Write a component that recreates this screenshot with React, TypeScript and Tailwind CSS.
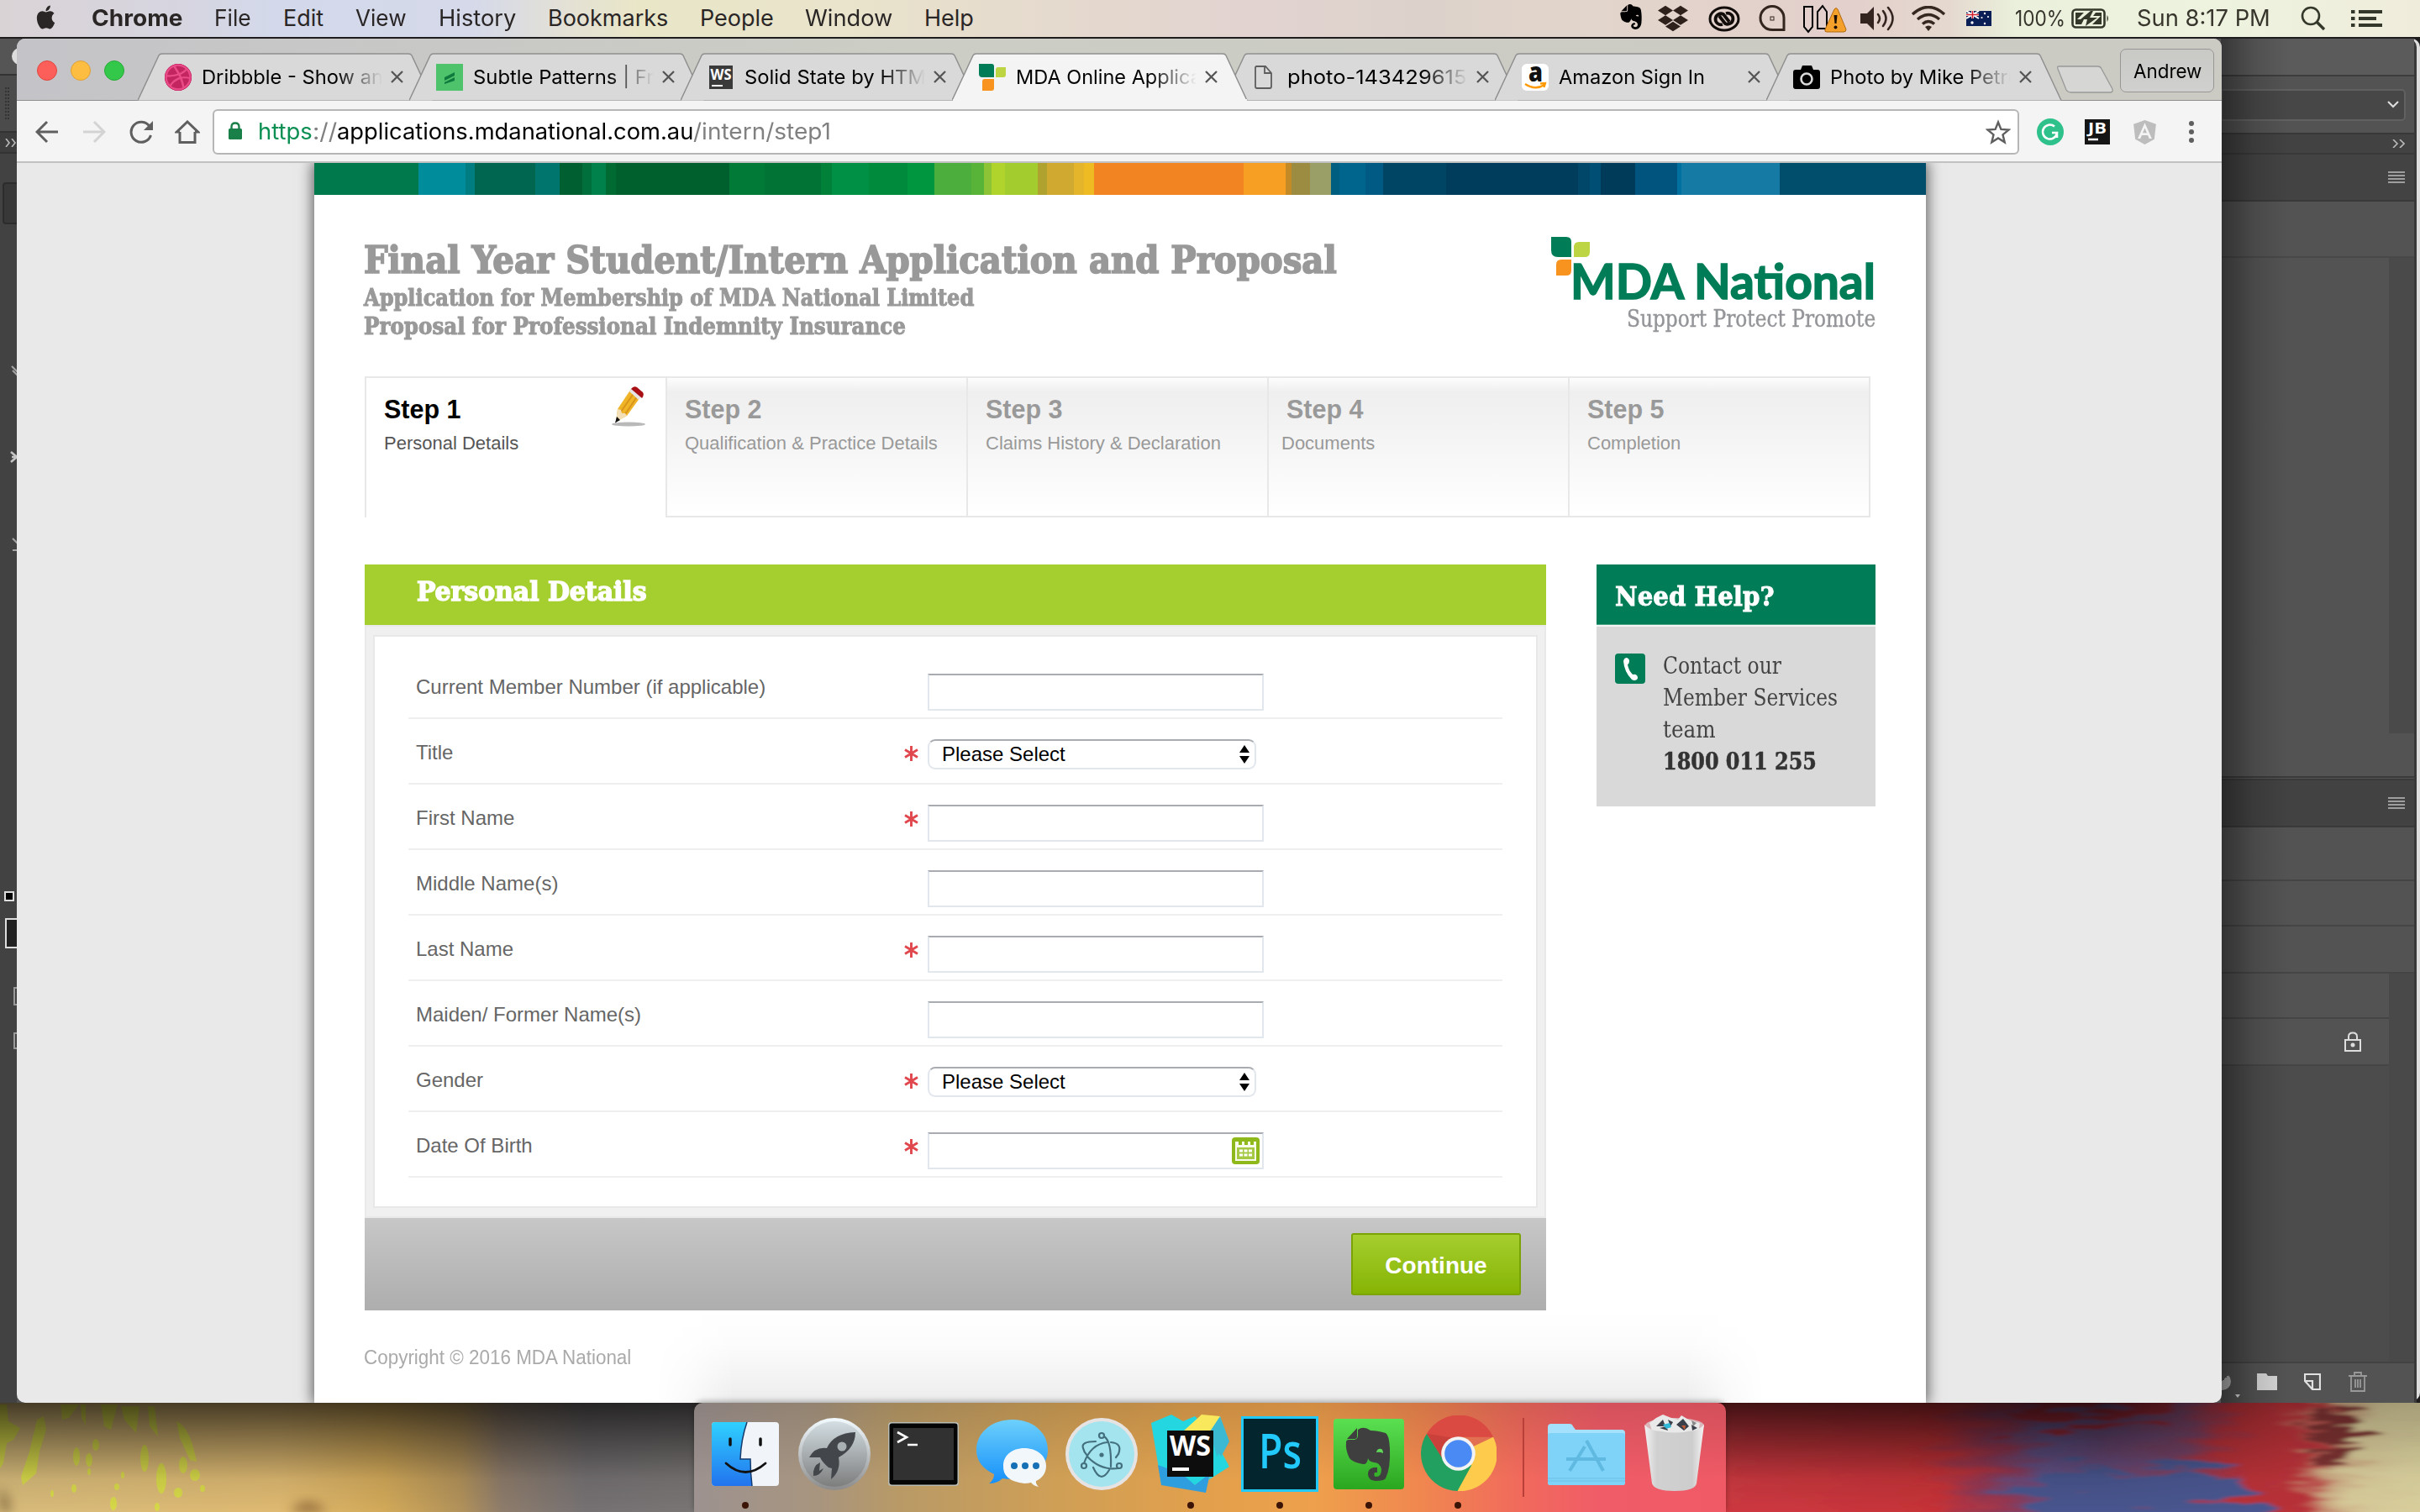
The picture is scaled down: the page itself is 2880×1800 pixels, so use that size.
import React, { useLayoutEffect, useRef, useState } from "react";
import { FaApple, FaEvernote, FaDropbox, FaDribbble, FaAngular } from "react-icons/fa";

/* A run of text squeezed or stretched to a known width. */
function Fit({ w, className = "", children }: { w: number; className?: string; children: React.ReactNode }) {
  const ref = useRef<HTMLSpanElement>(null);
  const [s, setS] = useState(1);
  useLayoutEffect(() => {
    if (ref.current) setS(w / ref.current.offsetWidth);
  }, [w]);
  return (
    <span className={"inline-block shrink-0 whitespace-nowrap " + className} style={{ width: w }}>
      <span ref={ref} className="inline-block origin-left" style={{ transform: `scaleX(${s})` }}>
        {children}
      </span>
    </span>
  );
}

const SLAB = "font-['DejaVu_Serif_Condensed','DejaVu_Serif',serif]";

/* ---------- menu bar ---------- */

function MenuBar() {
  return (
    <div className="absolute inset-x-0 top-0 h-[44px] bg-[linear-gradient(90deg,#dad3d6_0px,#d6d5e0_220px,#d3d9eb_330px,#d5d9ea_560px,#e4e1d4_680px,#e9e6c8_760px,#e9e4cb_1000px,#e6dccd_1180px,#e2d3d0_1480px,#ddd2cb_1700px,#e2d5cb_1900px,#e3cfcc_2200px,#e5d9cf_2320px,#eaf0dc_2400px,#edf3df_2640px,#f0ecdc_2880px)]">
      <div className="flex h-[44px] items-center text-[27px] leading-[44px] text-[#2a2626] font-['Inter',sans-serif]">
        <FaApple className="-mt-1 ml-[40px] mr-[40px] size-[29px] scale-y-110" />
        <Fit w={108} className="font-bold mr-[38px]">Chrome</Fit>
        <Fit w={44} className="mr-[38px]">File</Fit>
        <Fit w={48} className="mr-[38px]">Edit</Fit>
        <Fit w={61} className="mr-[38px]">View</Fit>
        <Fit w={92} className="mr-[38px]">History</Fit>
        <Fit w={143} className="mr-[38px]">Bookmarks</Fit>
        <Fit w={88} className="mr-[37px]">People</Fit>
        <Fit w={104} className="mr-[38px]">Window</Fit>
        <Fit w={59}>Help</Fit>
        <div className="grow" />
        <FaEvernote className="-mt-1 mr-[15px] size-[34px] text-black" />
        <FaDropbox className="mr-[24px] size-[36px] text-[#2e211c]" />
        <svg className="mr-[22px] h-[31px] w-[38px]" viewBox="0 0 38 31">
          <ellipse cx="19" cy="15.500" rx="17" ry="13.500" fill="none" stroke="#120d0b" strokeWidth="3" />
          <path d="M17 22a6.500 6.500 0 1 1 1-12l7 9M21 9a6.500 6.500 0 1 1-1 12l-7-9" fill="none" stroke="#120d0b" strokeWidth="3.800" />
        </svg>
        <svg className="mr-[20px] h-[32px] w-[32px]" viewBox="0 0 32 32">
          <path d="M30 29.500H16A14 14 0 1 1 30 16Z" fill="none" stroke="#33261f" strokeWidth="3" />
          <rect x="14" y="14" width="4" height="4" fill="none" stroke="#33261f" />
        </svg>
        <svg className="mr-[15px] h-[36px] w-[54px]" viewBox="0 0 54 36">
          <path d="M2 4h10v24l-5 6-5-6ZM18 30V10l6-7 5 7v20Z" fill="none" stroke="#000" strokeWidth="2" />
          <path d="M38 7q2-3 4 0l10 24q0 3-3 3H29q-3 0-2-3Z" fill="#f5a02a" stroke="#b06a10" />
          <path d="M37.500 14h4l-1 10h-2Z" fill="#1d0f00" />
          <circle cx="39.500" cy="28.500" r="2" fill="#1d0f00" />
        </svg>
        <svg className="mr-[18px] h-[34px] w-[42px]" viewBox="0 0 42 34">
          <path d="M0 11h8l8-8v28l-8-8H0Z" fill="#33241f" />
          <path d="M21 12q4 5 0 10M27 8q7 9 0 18M33 4q11 13 0 26" fill="none" stroke="#33241f" strokeWidth="2.500" strokeLinecap="round" />
        </svg>
        <svg className="mr-[24px] h-[30px] w-[42px]" viewBox="0 0 42 30">
          <path d="M2 10q19-17 38 0M8 16q13-11 26 0M14 21.500q7-6 14 0" fill="none" stroke="#352821" strokeWidth="3.400" />
          <path d="M17 25q4-3 8 0l-4 5Z" fill="#352821" />
        </svg>
        <svg className="mr-[28px] h-[18px] w-[30px]" viewBox="0 0 30 18">
          <rect width="30" height="18" fill="#0a1f56" />
          <path d="M0 0l15 9M15 0L0 9" stroke="#fff" strokeWidth="2" />
          <path d="M7.500 0v9M0 4.500h15" stroke="#fff" strokeWidth="3" />
          <path d="M7.500 0v9M0 4.500h15" stroke="#d0202e" strokeWidth="1.600" />
          <g fill="#fff"><circle cx="7" cy="14" r="1.700" /><circle cx="22" cy="3" r="1.200" /><circle cx="22" cy="15" r="1.200" /><circle cx="18.500" cy="8" r="1.100" /><circle cx="26" cy="7" r="1.100" /></g>
        </svg>
        <Fit w={60} className="mr-[7px] text-[26px] text-[#37352c]">100%</Fit>
        <svg className="mr-[32px] h-[24px] w-[46px]" viewBox="0 0 46 24">
          <rect x="1.500" y="1.500" width="38" height="21" rx="4" fill="none" stroke="#34382b" strokeWidth="2.600" />
          <path d="M5 5h10L7 13h8l-3 6H5ZM36 19H25l10-10h-9l3-4h7Z" fill="#34382b" />
          <path d="M23 3L11 13h8L17 21 31 11h-9l4-8Z" fill="#34382b" />
          <path d="M42.500 8q3 4 0 8Z" fill="#34382b" />
        </svg>
        <Fit w={159} className="mr-[36px] text-[#37352c]">Sun 8:17 PM</Fit>
        <svg className="mr-[30px] h-[30px] w-[30px]" viewBox="0 0 30 30">
          <circle cx="12" cy="12" r="10" fill="none" stroke="#34382b" strokeWidth="2.600" />
          <path d="M19 19l9 9" stroke="#34382b" strokeWidth="3.400" />
        </svg>
        <svg className="mr-[45px] h-[20px] w-[37px]" viewBox="0 0 37 20">
          <path d="M0 2h4.500M0 10h4.500M0 18h4.500M9 2h28M9 10h21M9 18h28" stroke="#34382b" strokeWidth="4" />
        </svg>
      </div>
    </div>
  );
}

/* ---------- browser chrome ---------- */

const fav: Record<string, React.ReactNode> = {
  dribbble: (
    <div className="grid size-[32px] place-items-center rounded-full bg-[#c2185b]">
      <FaDribbble className="size-[32px] rounded-full bg-[#c2255f] text-[#ea4c89]" />
    </div>
  ),
  subtle: (
    <svg className="size-[32px]" viewBox="0 0 32 32">
      <rect width="32" height="32" fill="#4fc36c" />
      <path d="M10 16L22 10v4L10 20ZM10 22l12-6v4l-12 4Z" fill="#0f7a3d" />
    </svg>
  ),
  ws: (
    <svg className="size-[32px]" viewBox="0 0 32 32">
      <rect x="2" y="2" width="28" height="28" fill="#3a3a3a" />
      <text x="3.500" y="18.500" fontSize="18" fontWeight="700" fill="#fff" textLength="25" lengthAdjust="spacingAndGlyphs" fontFamily="Open Sans, sans-serif">WS</text>
      <path d="M5 26h13" stroke="#fff" strokeWidth="2" />
    </svg>
  ),
  mda: (
    <svg className="size-[32px]" viewBox="0 0 32 32">
      <path d="M0 0h15q3 0 3 3v13H4q-4 0-4-4Z" fill="#007d57" />
      <path d="M20 16V7q0-3 3-3h9v9q0 3-3 3Z" fill="#bdd443" />
      <path d="M4 32V21q0-3 3-3h11v11q0 3-3 3Z" fill="#f7931e" />
    </svg>
  ),
  file: (
    <svg className="size-[32px]" viewBox="0 0 32 32">
      <path d="M7 3h11l7 8v16q0 2-2 2H8q-2 0-2-2V4ZM17 3v8h8" fill="none" stroke="#5d5d5d" strokeWidth="1.800" />
    </svg>
  ),
  amazon: (
    <div className="grid size-[32px] place-items-center rounded-[6px] bg-white">
      <svg className="size-[32px]" viewBox="0 0 32 32">
        <text x="8" y="21" fontSize="31" fontWeight="800" fill="#111" textLength="17" lengthAdjust="spacingAndGlyphs" fontFamily="Open Sans, sans-serif">a</text>
        <path d="M4 24q12 8 23 1M22 23.500l6-.5-1.500 5" fill="none" stroke="#f90" strokeWidth="2.300" />
      </svg>
    </div>
  ),
  camera: (
    <svg className="size-[32px]" viewBox="0 0 32 32">
      <path d="M3 7h6l2-5h11l2 5h5q3 0 3 3v17q0 3-3 3H3q-3 0-3-3V10q0-3 3-3Z" fill="#000" />
      <circle cx="16" cy="18" r="6.500" fill="none" stroke="#d9d9d9" strokeWidth="2.600" />
    </svg>
  ),
};

const tabs = [
  { icon: "dribbble", text: "Dribbble - Show an", w: 216, fade: true },
  { icon: "subtle", text: "Subtle Patterns | Fr", w: 215, fade: true },
  { icon: "ws", text: "Solid State by HTM", w: 216, fade: true },
  { icon: "mda", text: "MDA Online Applica", w: 221, fade: true, active: true },
  { icon: "file", text: "photo-143429615", w: 214, fade: true },
  { icon: "amazon", text: "Amazon Sign In", w: 174, fade: false },
  { icon: "camera", text: "Photo by Mike Petru", w: 226, fade: true },
];

function Tab({ t }: { t: (typeof tabs)[number] }) {
  return (
    <div className={"relative h-[57px] w-[323px] shrink-0 " + (t.active ? "z-10" : "")}>
      <svg className="absolute -left-[26px] top-0 h-[57px] w-[352px]" viewBox="0 0 352 57">
        <path d="M0 56.500L25 3q1-2 4-2H322q3 0 4 2L351 56.500" fill={t.active ? "#f4f4f4" : "#d9d9d9"} stroke="#8f8f8f" strokeWidth="1.500" />
        {t.active && <path d="M1 56h350" stroke="#f4f4f4" strokeWidth="2" />}
      </svg>
      <div className="relative flex h-[57px] items-center pl-[6px]">
        {fav[t.icon]}
        <div
          className={
            "ml-[12px] w-[217px] text-[23.5px] leading-[56px] text-black font-['Inter',sans-serif] " +
            (t.fade ? "[mask-image:linear-gradient(90deg,#000_74%,transparent_99%)]" : "")
          }
        >
          <Fit w={t.w}>{t.text}</Fit>
        </div>
        <svg className="ml-[8px] size-[15px]" viewBox="0 0 15 15">
          <path d="M1 1l13 13M14 1L1 14" stroke="#555" strokeWidth="2.300" />
        </svg>
      </div>
    </div>
  );
}

function TabStrip() {
  return (
    <div className="flex h-[74px] border-b border-[#8f8f8f] bg-[linear-gradient(90deg,#c4c4c8,#cccdc4_40%,#cbcac3)]">
      <div className="ml-[24px] mt-[26px] flex w-[146px] shrink-0 gap-[16px]">
        <div className="size-[24px] rounded-full border border-[#e2463f] bg-[#fc5f5a]" />
        <div className="size-[24px] rounded-full border border-[#dfa035] bg-[#fdbd40]" />
        <div className="size-[24px] rounded-full border border-[#27aa35] bg-[#34c84a]" />
      </div>
      <div className="mt-[17px] flex w-[2286px]">
        {tabs.map((t) => (
          <Tab key={t.text} t={t} />
        ))}
        <svg className="-ml-[4px] mt-[15px] h-[34px] w-[70px] shrink-0" viewBox="0 0 70 34">
          <path d="M3 1H49q4 0 5 3L67 28q1 4-3 4H18q-4 0-6-3L2 4q-1-3 1-3Z" fill="#d6d6d4" stroke="#999" strokeWidth="1.300" />
        </svg>
      </div>
      <div className="ml-[47px] mt-[12px] h-[52px] w-[112px] rounded-[7px] border-[1.5px] border-[#979797] bg-[linear-gradient(#c9c9c6,#d0d0ce)] text-center text-[23.500px] leading-[52px] text-black font-['Inter',sans-serif]">
        <Fit w={81} className="text-left">Andrew</Fit>
      </div>
    </div>
  );
}

function Toolbar() {
  return (
    <div className="flex h-[74px] items-center border-b-[2px] border-[#c1c1c1] bg-[#f4f4f4] pt-[2px]">
      <svg className="ml-[22px] h-[28px] w-[28px]" viewBox="0 0 28 28">
        <path d="M27 14H3M14 2L2 14l12 12" fill="none" stroke="#5f5f5f" strokeWidth="3" />
      </svg>
      <svg className="ml-[28px] h-[28px] w-[28px]" viewBox="0 0 28 28">
        <path d="M1 14h24M14 2l12 12-12 12" fill="none" stroke="#d3d3d3" strokeWidth="3" />
      </svg>
      <svg className="ml-[28px] h-[28px] w-[30px]" viewBox="0 0 30 28">
        <path d="M25.500 18A12 12 0 1 1 24 7.500" fill="none" stroke="#5f5f5f" strokeWidth="3" />
        <path d="M28 1v11H17Z" fill="#5f5f5f" />
      </svg>
      <svg className="ml-[24px] h-[28px] w-[30px]" viewBox="0 0 30 28">
        <path d="M6 14v12.500h18V14M6 14H2.500L15 2l12.500 12H24" fill="none" stroke="#5f5f5f" strokeWidth="3" />
      </svg>
      <div className="ml-[15px] flex h-[54px] w-[2150px] items-center rounded-[6px] border-[2px] border-[#b6b6b6] bg-white text-[27px] leading-[50px] font-['Inter',sans-serif]">
        <svg className="-mt-[2px] ml-[16px] h-[22px] w-[18px]" viewBox="0 0 18 22">
          <rect x="1" y="8" width="16" height="13" rx="1.500" fill="#188048" />
          <path d="M4.500 9V6q0-4.500 4.500-4.500T13.500 6v3" fill="none" stroke="#188048" strokeWidth="2.400" />
        </svg>
        <Fit w={65} className="ml-[18px] text-[#0b8f53]">https</Fit>
        <Fit w={29} className="text-[#808080]">://</Fit>
        <Fit w={424} className="text-black">applications.mdanational.com.au</Fit>
        <Fit w={164} className="text-[#808080]">/intern/step1</Fit>
        <div className="grow" />
        <svg className="mr-[8px] h-[30px] w-[30px]" viewBox="0 0 30 30">
          <path d="M15 3.500l3.400 8.400 9 .7-6.900 5.800 2.200 8.900L15 22.500l-7.700 4.800 2.200-8.900L2.600 12.600l9-.7Z" fill="none" stroke="#5f5f5f" strokeWidth="2.400" />
        </svg>
      </div>
      <svg className="ml-[21px] size-[32px]" viewBox="0 0 32 32">
        <circle cx="16" cy="16" r="16" fill="#2fc18c" />
        <path d="M21 9.500A8.500 8.500 0 1 0 24 17H18M24 17v6" fill="none" stroke="#fff" strokeWidth="2.600" />
      </svg>
      <svg className="ml-[25px] size-[30px]" viewBox="0 0 30 30">
        <rect width="30" height="30" fill="#151515" />
        <text x="4" y="17" fontSize="17" fontWeight="700" fill="#fff" textLength="22" lengthAdjust="spacingAndGlyphs" fontFamily="Open Sans, sans-serif">JB</text>
        <path d="M4 24h12" stroke="#fff" strokeWidth="2.400" />
      </svg>
      <FaAngular className="ml-[25px] size-[33px] text-[#bdbdbd]" />
      <div className="ml-[36px] flex flex-col gap-[4px]">
        <div className="size-[6px] rounded-full bg-[#5f5f5f]" />
        <div className="size-[6px] rounded-full bg-[#5f5f5f]" />
        <div className="size-[6px] rounded-full bg-[#5f5f5f]" />
      </div>
    </div>
  );
}

/* ---------- page ---------- */

const stripe: [number, string][] = [
  [124, "#007a4d"], [56, "#008c9a"], [11, "#007d80"], [72, "#006650"], [29, "#00756d"], [27, "#005f30"], [11, "#006f3c"],
  [17, "#00804a"], [12, "#006a33"], [135, "#00602d"], [42, "#007a36"], [67, "#007335"], [13, "#008038"], [44, "#009045"],
  [46, "#008a3c"], [32, "#00963f"], [44, "#4cae3c"], [15, "#58b438"], [9, "#8cc435"], [16, "#b1d42c"], [39, "#a3cc2f"],
  [11, "#b0a22e"], [32, "#d0aa30"], [12, "#e4b52a"], [12, "#efbb22"], [178, "#f28422"], [50, "#f79f22"], [7, "#c48a26"],
  [22, "#9b8c42"], [25, "#9a9f68"], [10, "#005f80"], [31, "#00658c"], [21, "#005a84"], [75, "#004563"], [157, "#003d5c"],
  [14, "#00476a"], [13, "#004e74"], [41, "#003c5a"], [50, "#00547e"], [5, "#0070a0"], [117, "#167ba4"], [174, "#004e6b"],
];

const steps = [
  { t: "Step 1", d: "Personal Details", active: true },
  { t: "Step 2", d: "Qualification & Practice Details" },
  { t: "Step 3", d: "Claims History & Declaration" },
  { t: "Step 4", d: "Documents", out: true },
  { t: "Step 5", d: "Completion" },
];

const fields = [
  { label: "Current Member Number (if applicable)", kind: "input", req: false },
  { label: "Title", kind: "select", req: true },
  { label: "First Name", kind: "input", req: true },
  { label: "Middle Name(s)", kind: "input", req: false },
  { label: "Last Name", kind: "input", req: true },
  { label: "Maiden/ Former Name(s)", kind: "input", req: false },
  { label: "Gender", kind: "select", req: true },
  { label: "Date Of Birth", kind: "date", req: true },
];

function Pencil() {
  return (
    <svg className="absolute right-[22px] top-[10px] h-[48px] w-[44px]" viewBox="0 0 44 48">
      <ellipse cx="22" cy="45" rx="20" ry="2.500" fill="#b9b9b9" />
      <path d="M25 3L36 13 20 35 7 42 9 27Z" fill="#f0b429" />
      <path d="M29 7L13 30M33 11L18 33" stroke="#d8951a" strokeWidth="2" />
      <path d="M9 27l4 1 1 4 4 0 2 3L7 42Z" fill="#f3dfb8" />
      <path d="M8 36l4 4-6 3.500Z" fill="#111" />
      <path d="M23 6L34 16l2.500-3.500L25.500 2.500Z" fill="#e6e6e6" />
      <path d="M25 3q3-4 7-2l7 6q2 3-1 7Z" fill="#a81016" />
    </svg>
  );
}

function FieldRow({ f }: { f: (typeof fields)[number] }) {
  return (
    <div className="flex h-[78px] items-start border-b-2 border-[#efefef] pl-[9px]">
      <div className="w-[581px] pt-[24px] text-[24px] leading-[32px] text-[#666]">{f.label}</div>
      <div className="w-[28px] pt-[32px]">
        {f.req && (
          <svg className="h-[18px] w-[17px]" viewBox="0 0 17 18">
            <path d="M8.500 0v18M1 4.500l15 9M16 4.500L1 13.500" stroke="#e0484e" strokeWidth="2.900" />
          </svg>
        )}
      </div>
      {f.kind === "select" ? (
        <div className="mt-[24px] flex h-[36px] w-[391px] items-center rounded-[9px] border-2 border-[#e2e6ed] border-t-[#a8abb0] bg-white pl-[15px] text-[24px] leading-[32px] text-black">
          <span className="grow">Please Select</span>
          <svg className="mr-[6px] h-[22px] w-[12px]" viewBox="0 0 12 22">
            <path d="M6 0l6 9H0ZM6 22l-6-9h12Z" fill="#000" />
          </svg>
        </div>
      ) : (
        <div className="mt-[24px] flex h-[44px] w-[400px] items-start justify-end border-2 border-[#e2e6ed] border-t-[#a8abb0] bg-white">
          {f.kind === "date" && (
            <svg className="mr-[3px] mt-[4px] h-[32px] w-[33px]" viewBox="0 0 33 32">
              <rect width="33" height="32" rx="4" fill="#8fb81b" />
              <path d="M4 5h4v4h4V5h3v4h4V5h3v4h4V5h3v23H4Z" fill="#f7fbe9" />
              <rect x="6" y="12" width="21" height="14" fill="#a6c944" />
              <path d="M9 16h15M9 21h15" stroke="#fff" strokeWidth="3" strokeDasharray="4 1.500" />
            </svg>
          )}
        </div>
      )}
    </div>
  );
}

function Page() {
  return (
    <div className="ml-[354px] flex h-[1476px] w-[1918px] flex-col bg-white shadow-[0_0_16px_2px_rgba(0,0,0,0.6)] font-['Liberation_Sans',Arial,sans-serif]">
      <div className="flex h-[38px] shrink-0">
        {stripe.map(([w, c], i) => (
          <div key={i} className="shrink-0" style={{ width: w, background: c }} />
        ))}
      </div>

      <div className="flex h-[216px] justify-between pl-[59px] pr-[60px]">
        <div className={"flex flex-col pt-[52px] font-bold text-[#999] " + SLAB}>
          <Fit w={1158} className="h-[52px] text-[44px] leading-[52px] [-webkit-text-stroke:1.6px_#999]">Final Year Student/Intern Application and Proposal</Fit>
          <Fit w={726} className="h-[36px] text-[27.500px] leading-[36px] [-webkit-text-stroke:1px_#999]">Application for Membership of MDA National Limited</Fit>
          <Fit w={645} className="h-[34px] text-[27.500px] leading-[33px] [-webkit-text-stroke:1px_#999]">Proposal for Professional Indemnity Insurance</Fit>
        </div>
        <div className="relative mt-[50px] flex h-[120px] w-[386px] flex-col items-end">
          <svg className="absolute left-0 top-0 h-[46px] w-[46px]" viewBox="0 0 46 46">
            <path d="M0 0h18q6 0 6 6v18H8q-8 0-8-8Z" fill="#007d57" />
            <path d="M27 24V12q0-6 6-6h13v12q0 6-6 6Z" fill="#bdd443" />
            <path d="M6 46V33q0-6 6-6h12v13q0 6-6 6Z" fill="#f7931e" />
          </svg>
          <Fit w={363} className="mt-[17px] h-[69px] text-[57px] font-bold leading-[70px] text-[#007d57] [-webkit-text-stroke:1.6px_#007d57] font-['Lato',sans-serif]">MDA National</Fit>
          <Fit w={296} className={"-mt-[6px] h-[36px] text-[27px] leading-[36px] text-[#939598] [-webkit-text-stroke:0.4px_#939598] " + SLAB}>Support Protect Promote</Fit>
        </div>
      </div>

      <div className="ml-[60px] flex h-[168px] w-[1792px] shrink-0 border-t-2 border-[#e8e8e8]">
        {steps.map((s) => (
          <div
            key={s.t}
            className={
              "relative h-[166px] w-[358px] shrink-0 border-l-2 border-[#e8e8e8] pl-[21px] pt-[21px] last:w-[360px] last:border-r-2 " +
              (s.active ? "bg-white" : "border-b-2 bg-[linear-gradient(#fdfdfd_0%,#efefef_10%,#f1f1f1_25%,#fff_100%)]")
            }
          >
            <div className={"text-[30.500px] font-bold leading-[32px] " + (s.active ? "text-black" : "text-[#999]")}>{s.t}</div>
            <div className={"mt-[9px] whitespace-nowrap text-[22px] leading-[32px] " + (s.active ? "text-[#555]" : "text-[#999]") + (s.out ? " -ml-[6px]" : "")}>{s.d}</div>
            {s.active && <Pencil />}
          </div>
        ))}
      </div>

      <div className="mt-[56px] flex items-start px-[60px]">
        <div className="w-[1406px]">
          <div className={"h-[72px] bg-[#a5ce2f] pl-[62px] text-[32px] font-bold leading-[65px] text-white " + SLAB}>
            <Fit w={274} className="[-webkit-text-stroke:1.4px_#fff]">Personal Details</Fit>
          </div>
          <div className="h-[706px] border-2 border-[#e9e9e9] bg-[#f0f0f0] px-[8px] py-[10px]">
            <div className="h-[682px] border-2 border-[#e8e8e8] bg-white pl-[40px] pr-[40px] pt-[20px]">
              {fields.map((f) => (
                <FieldRow key={f.label} f={f} />
              ))}
            </div>
          </div>
          <div className="flex h-[110px] items-start justify-end bg-[linear-gradient(#c7c7c7,#b1b1b1_85%,#aeaeae)] pr-[30px] pt-[18px]">
            <div className="h-[74px] w-[202px] rounded-[3px] border-2 border-[#7ba306] bg-[linear-gradient(#a5ce2f,#86b404)] text-center text-[28px] font-bold leading-[74px] text-white">Continue</div>
          </div>
          <div className="-ml-[1px] pt-[40px] text-[23px] leading-[32px] text-[#aaa]">
            <Fit w={318}>Copyright © 2016 MDA National</Fit>
          </div>
        </div>
        <div className="ml-[60px] w-[332px]">
          <div className={"h-[72px] border-b border-[#4ba385] bg-[#007d57] pl-[22px] text-[32px] font-bold leading-[77px] text-white " + SLAB}>
            <Fit w={190} className="[-webkit-text-stroke:0.8px_#fff]">Need Help?</Fit>
          </div>
          <div className="h-[2px] bg-[#f4f4f4]" />
          <div className="flex h-[214px] bg-[#d9d9d9] pl-[22px] pt-[32px]">
            <svg className="size-[36px]" viewBox="0 0 36 36">
              <rect width="36" height="36" rx="4" fill="#007d57" />
              <path d="M10 9q1-4 4-4 3 1 3 4 0 3-2 4 1 7 6 12 3-1 5 1 2 3 0 5-3 2-6 0Q11 22 10 9Z" fill="#fff" />
            </svg>
            <div className={"-mt-[4px] ml-[21px] flex flex-col text-[27px] leading-[38px] text-[#444] " + SLAB}>
              <Fit w={141} className="h-[38px]">Contact our</Fit>
              <Fit w={208} className="h-[38px]">Member Services</Fit>
              <Fit w={63} className="h-[38px]">team</Fit>
              <Fit w={183} className="h-[38px] font-bold text-[#333] [-webkit-text-stroke:0.5px_#333]">1800 011 255</Fit>
            </div>
          </div>
        </div>
      </div>
    </div>
  );
}

function Browser() {
  return (
    <div className="absolute left-[20px] top-[46px] h-[1624px] w-[2624px] overflow-hidden rounded-[10px] bg-[#e9e9e9]">
      <TabStrip />
      <Toolbar />
      <div className="relative h-[1476px] overflow-hidden">
        <Page />
        <div className="absolute bottom-0 left-[760px] h-[110px] w-[1320px] bg-[linear-gradient(transparent,rgba(0,0,0,0.012)_35%,rgba(0,0,0,0.045)_70%,rgba(0,0,0,0.075))] [mask-image:linear-gradient(90deg,transparent,rgba(0,0,0,.3)_3%,#000_7%,#000_93%,rgba(0,0,0,.3)_97%,transparent)]" />
      </div>
    </div>
  );
}

/* ---------- editor window behind ---------- */

function PanelMenu() {
  return (
    <svg className="h-[14px] w-[20px]" viewBox="0 0 20 14">
      <path d="M0 1h20M0 5h20M0 9h20M0 13h20" stroke="#bdbdbd" strokeWidth="1.600" />
    </svg>
  );
}

function Editor() {
  return (
    <div className="absolute left-0 top-[46px] flex h-[1624px] w-[2876px] justify-between rounded-t-[10px] border-r-[3px] border-[#393939] bg-[#535353]">
      <div className="flex w-[20px] flex-col overflow-hidden bg-[#424242]">
        <div className="flex h-[44px] items-center justify-end border-b-2 border-[#333] bg-[#555]">
          <div className="-mr-[14px] size-[20px] shrink-0 rounded-full bg-[#ddd]" />
        </div>
        <div className="flex h-[68px] items-center border-b-2 border-[#333] bg-[#4b4b4b] pl-[6px]">
          <div className="h-[38px] w-[5px] border-x-[2px] border-dotted border-[#333]" />
        </div>
        <div className="flex h-[25px] items-center border-b-2 border-[#333] bg-[#3d3d3d] pl-[6px]">
          <svg className="h-[10px] w-[14px]" viewBox="0 0 14 10"><path d="M1 0l4 5-4 5M8 0l4 5-4 5" fill="none" stroke="#bbb" strokeWidth="1.600" /></svg>
        </div>
        <div className="ml-[3px] mt-[34px] h-[50px] w-[24px] rounded-[4px] border-2 border-[#2c2c2c] bg-[#383838]" />
        <svg className="ml-[13px] mt-[164px] h-[18px] w-[16px] shrink-0" viewBox="0 0 16 18"><path d="M1 5l6 6 9-9M2 10l7 7" fill="none" stroke="#a5a5a5" strokeWidth="2" /></svg>
        <svg className="ml-[12px] mt-[86px] h-[18px] w-[16px] shrink-0" viewBox="0 0 16 18"><path d="M1 3l7 6-7 6M2 9h10" fill="none" stroke="#c5c5c5" strokeWidth="2.500" /></svg>
        <svg className="ml-[13px] mt-[86px] h-[18px] w-[16px] shrink-0" viewBox="0 0 16 18"><path d="M2 2l8 8M2 16h12V8" fill="none" stroke="#a5a5a5" strokeWidth="2" /></svg>
        <div className="ml-[5px] mt-[404px] size-[12px] shrink-0 border-2 border-[#ddd] bg-black" />
        <div className="ml-[6px] mt-[20px] h-[36px] w-[36px] shrink-0 border-2 border-[#ddd] bg-[#222]" />
        <div className="ml-[16px] mt-[46px] h-[22px] w-[20px] shrink-0 border-2 border-[#999]" />
        <div className="ml-[16px] mt-[32px] h-[20px] w-[20px] shrink-0 border-2 border-[#999]" />
      </div>

      <div className="relative flex w-[230px] flex-col">
        <div className="h-[45px] border-b-2 border-[#3d3d3d] bg-[#5b5b5b]" />
        <div className="flex h-[69px] items-center border-b-2 border-[#383838]">
          <div className="flex h-[38px] w-[220px] items-center justify-end rounded-r-[5px] border-[2px] border-[#616161] bg-[#474747] pr-[6px]">
            <svg className="h-[9px] w-[14px]" viewBox="0 0 14 9"><path d="M1 1l6 6 6-6" fill="none" stroke="#ddd" strokeWidth="2.200" /></svg>
          </div>
        </div>
        <div className="flex h-[24px] items-center justify-end border-b-2 border-[#393939] bg-[#424242] pr-[11px]">
          <svg className="h-[10px] w-[15px]" viewBox="0 0 15 10"><path d="M1 0l5 5-5 5M9 0l5 5-5 5" fill="none" stroke="#bbb" strokeWidth="1.600" /></svg>
        </div>
        <div className="flex h-[56px] items-center justify-end border-b-2 border-[#393939] bg-[#434343] pr-[11px]"><PanelMenu /></div>
        <div className="h-[67px] border-b-2 border-[#484848]" />
        <div className="flex h-[566px] justify-end"><div className="w-[30px] bg-[#4a4a4a]" /></div>
        <div className="h-[51px]" />
        <div className="h-[5px] border-y-2 border-[#3a3a3a]" />
        <div className="flex h-[56px] items-center justify-end border-b-2 border-[#393939] bg-[#424242] pr-[11px]"><PanelMenu /></div>
        <div className="h-[64px] border-b-2 border-[#454545]" />
        <div className="h-[54px] border-b-2 border-[#454545]" />
        <div className="h-[56px] border-b-2 border-[#454545]" />
        <div className="flex">
          <div className="w-[200px]">
            <div className="h-[54px] border-b-2 border-[#454545]" />
            <div className="flex h-[56px] items-center justify-end border-b-2 border-[#454545] pr-[33px]">
              <svg className="h-[24px] w-[20px]" viewBox="0 0 20 24">
                <path d="M1 10h18v13H1ZM5 10V6q0-4.500 5-4.500T15 6v4" fill="none" stroke="#ddd" strokeWidth="2" />
                <circle cx="10" cy="16" r="2.500" fill="#ddd" />
              </svg>
            </div>
            <div className="h-[352px] bg-[#4c4c4c]" />
          </div>
          <div className="h-[462px] w-[30px] bg-[#494949]" />
        </div>
        <div className="flex grow items-center border-t-2 border-[#424242] pb-[4px]">
          <div className="-ml-[9px] size-[21px] rounded-full bg-[linear-gradient(135deg,#555_50%,#b5b5b5_50%)]" />
          <svg className="mt-[34px] ml-[5px] h-[4px] w-[6px]" viewBox="0 0 6 4"><path d="M0 0h6L3 4Z" fill="#ddd" /></svg>
          <svg className="ml-[20px] h-[20px] w-[24px]" viewBox="0 0 24 20"><path d="M0 0h11l2 3h11v17H0Z" fill="#d6d6d6" /></svg>
          <svg className="ml-[32px] h-[20px] w-[20px]" viewBox="0 0 20 20"><path d="M1 9V1h18v18H10ZM1 9h9v10Z" fill="none" stroke="#e0e0e0" strokeWidth="2.200" /></svg>
          <svg className="ml-[33px] h-[24px] w-[22px]" viewBox="0 0 22 24"><path d="M0 5h22M7 5V1h8v4M3 5v18h16V5M8 9v10M11 9v10M14 9v10" fill="none" stroke="#999" strokeWidth="1.800" /></svg>
        </div>
        <div className="absolute inset-y-0 left-0 w-[80px] bg-[linear-gradient(90deg,rgba(0,0,0,0.4),rgba(0,0,0,0.12)_50%,transparent)]" />
      </div>
    </div>
  );
}

/* ---------- wallpaper ---------- */

function Wallpaper() {
  return (
    <svg className="absolute left-0 top-[1670px] h-[130px] w-[2880px]" viewBox="0 0 2880 130" preserveAspectRatio="none">
      <defs>
        <linearGradient id="wl" x1="0" x2="830" y1="0" y2="0" gradientUnits="userSpaceOnUse">
          <stop offset="0" stopColor="#d8bc7c" />
          <stop offset=".4" stopColor="#dfba72" />
          <stop offset=".55" stopColor="#d3aa5a" />
          <stop offset=".66" stopColor="#b3935b" />
          <stop offset=".72" stopColor="#8f7d6c" />
          <stop offset=".84" stopColor="#767274" />
          <stop offset="1" stopColor="#7a7675" />
        </linearGradient>
        <linearGradient id="wr" x1="2050" x2="2880" y1="0" y2="0" gradientUnits="userSpaceOnUse">
          <stop offset="0" stopColor="#cf3a42" />
          <stop offset=".3" stopColor="#c63338" />
          <stop offset=".4" stopColor="#8f3a58" />
          <stop offset=".46" stopColor="#625288" />
          <stop offset=".66" stopColor="#7a4468" />
          <stop offset=".74" stopColor="#b83038" />
          <stop offset=".83" stopColor="#b8343a" />
          <stop offset=".87" stopColor="#c9a480" />
          <stop offset=".92" stopColor="#d6c898" />
          <stop offset="1" stopColor="#d9cf9d" />
        </linearGradient>
        <linearGradient id="sh" x1="0" x2="0" y1="0" y2="1">
          <stop offset="0" stopColor="#000" stopOpacity=".68" />
          <stop offset=".3" stopColor="#000" stopOpacity=".42" />
          <stop offset=".7" stopColor="#000" stopOpacity=".08" />
          <stop offset="1" stopColor="#000" stopOpacity="0" />
        </linearGradient>
        <linearGradient id="fade" x1="2500" x2="2720" y1="0" y2="0" gradientUnits="userSpaceOnUse">
          <stop offset="0" stopColor="#fff" />
          <stop offset="1" stopColor="#fff" stopOpacity=".35" />
        </linearGradient>
        <mask id="edge"><rect width="2880" height="130" fill="url(#fade)" /></mask>
        <filter id="soft" x="-1" y="-1" width="3" height="3"><feGaussianBlur stdDeviation="7" /></filter>
        <filter id="brush" x="0" y="0" width="1" height="1">
          <feTurbulence type="fractalNoise" baseFrequency="0.012 0.09" numOctaves="3" seed="4" result="n" />
          <feDisplacementMap in="SourceGraphic" in2="n" scale="110" xChannelSelector="R" yChannelSelector="G" />
          <feGaussianBlur stdDeviation="5 1.500" />
        </filter>
      </defs>
      <rect width="1440" height="130" fill="url(#wl)" />
      <rect x="1440" width="1440" height="130" fill="url(#wr)" />
      <path d="M345 130q20-22 45 0Z" fill="#8a6236" filter="url(#soft)" />
      <path d="M0 100q12 12 14 30H0Z" fill="#8f7448" filter="url(#soft)" />
      <g filter="url(#brush)">
        <rect x="2000" y="-80" width="940" height="300" fill="url(#wr)" />
        <path d="M2390 150q30-80 190-80l90 20 10 80Z" fill="#4a568f" />
        <path d="M2400 -60h220l-40 80h-180Z" fill="#9c2c38" />
        <path d="M2755 10l60 20-30 50-40-20Z" fill="#7d3030" />
      </g>
      <g fill="#d8e043" opacity=".85">
        <path d="M0 2h8l2 20 14 8-8 14-8 4-4 24-4 6Z" />
        <path d="M44 20l8-4 3 16-8 26-4 26-16 14-2-10 10-30Z" />
        <path d="M72 2h22l-12 16-8 2ZM96 2h6v24l-5-8ZM120 2h20l-8 30-8-4ZM144 4h22l-4 32-14-16ZM176 4h8l4 36-10-12ZM210 22q16 6 24 48l-8-2-12-26Z" />
        <ellipse cx="91" cy="64" rx="4" ry="11" /><ellipse cx="106" cy="68" rx="4" ry="8" /><ellipse cx="172" cy="66" rx="5" ry="16" />
        <ellipse cx="218" cy="74" rx="5" ry="10" /><ellipse cx="192" cy="90" rx="6" ry="18" /><ellipse cx="232" cy="86" rx="6" ry="7" />
        <ellipse cx="212" cy="107" rx="5" ry="6" /><ellipse cx="114" cy="50" rx="4" ry="7" /><ellipse cx="88" cy="102" rx="3" ry="5" />
        <ellipse cx="135" cy="120" rx="4" ry="8" /><ellipse cx="139" cy="100" rx="3" ry="4" /><ellipse cx="241" cy="102" rx="3" ry="4" />
        <ellipse cx="146" cy="86" rx="2" ry="4" /><ellipse cx="106" cy="82" rx="2" ry="4" /><ellipse cx="187" cy="124" rx="3" ry="5" /><ellipse cx="62" cy="108" rx="2" ry="4" />
      </g>
      <rect width="2880" height="130" fill="url(#sh)" mask="url(#edge)" />
    </svg>
  );
}

/* ---------- dock ---------- */

function Finder() {
  return (
    <svg className="h-[76px] w-[80px]" viewBox="0 0 80 76">
      <defs>
        <linearGradient id="fi" x1="0" x2="0" y1="0" y2="1"><stop stopColor="#2fd1ff" /><stop offset="1" stopColor="#2273ee" /></linearGradient>
      </defs>
      <rect width="80" height="76" rx="4" fill="#f1f4f9" />
      <path d="M4 0H42Q35 20 34 44H46Q46 60 48 76H4q-4 0-4-4V4q0-4 4-4Z" fill="url(#fi)" />
      <path d="M42 0Q35 20 34 44H46Q46 60 48 76" fill="none" stroke="#163a6c" strokeWidth="1.500" />
      <path d="M22 20v7M58 20v7" stroke="#111" strokeWidth="3.500" strokeLinecap="round" />
      <path d="M17 49q23 21 47 0" fill="none" stroke="#111" strokeWidth="2.800" strokeLinecap="round" />
    </svg>
  );
}

function Launchpad() {
  return (
    <svg className="size-[86px]" viewBox="0 0 86 86">
      <defs>
        <linearGradient id="lp" x1="0" x2="0" y1="0" y2="1"><stop stopColor="#d3dee3" /><stop offset="1" stopColor="#7d7d7d" /></linearGradient>
        <linearGradient id="lq" x1="0" x2="0" y1="0" y2="1"><stop stopColor="#f3fbff" /><stop offset="1" stopColor="#8b8b8b" /></linearGradient>
      </defs>
      <circle cx="43" cy="43" r="43" fill="url(#lq)" />
      <circle cx="43" cy="43" r="39" fill="url(#lp)" />
      <path d="M68 17Q42 18 34 36q-14-2-21 11l13 0q2 5 10 12l4 1-1 13q12-10 9-26Q68 36 68 17Z" fill="#43474b" />
      <path d="M26 53q-9 4-8 16 8 0 12-9l-5 3Z" fill="#43474b" />
      <circle cx="52" cy="34" r="5.500" fill="#a8b0b4" />
    </svg>
  );
}

function Terminal() {
  return (
    <svg className="h-[76px] w-[84px]" viewBox="0 0 84 76">
      <rect width="84" height="76" rx="4" fill="#b9bcb5" />
      <rect x="1.500" y="1.500" width="81" height="73" rx="3" fill="#050505" />
      <rect x="6" y="7" width="72" height="62" fill="#313131" />
      <path d="M11 12l11 6-11 6M23 27h12" fill="none" stroke="#fff" strokeWidth="2.600" />
    </svg>
  );
}

function Messages() {
  return (
    <svg className="h-[82px] w-[86px]" viewBox="0 0 86 82">
      <defs>
        <linearGradient id="ms" x1="0" x2="0" y1="0" y2="1"><stop stopColor="#6dd0fb" /><stop offset="1" stopColor="#1590fb" /></linearGradient>
      </defs>
      <path d="M43 0C67 0 85 15 85 36S67 71 43 71q-7 0-12-1-6 6-16 6 6-4 6-11Q0 55 0 36C0 15 19 0 43 0Z" fill="url(#ms)" />
      <path d="M57 34c15 0 26 9 26 21 0 9-5 15-12 18q-1 3 3 7-6-1-9-5-4 1-8 1-26-3-25-21c0-12 10-21 25-21Z" fill="#f2f7fc" />
      <g fill="#1670b5"><circle cx="45" cy="55" r="4" /><circle cx="58" cy="55" r="4" /><circle cx="71" cy="55" r="4" /></g>
    </svg>
  );
}

function Electron() {
  return (
    <svg className="size-[86px]" viewBox="0 0 86 86">
      <circle cx="43" cy="43" r="43" fill="#e6e3e2" />
      <circle cx="43" cy="43" r="39" fill="#a3e4ef" />
      <g fill="none" stroke="#44707d" strokeWidth="2.200">
        <path d="M46 22q9 6 8 36M50 29Q30 31 22 54M26 46q16 17 37 14M36 28q-18 0-15 8 1 5 5 9M54 29q14 1 9 14l-3 4M33 59q9 20 19 3" strokeLinecap="round" />
        <circle cx="43" cy="21" r="3" /><circle cx="22" cy="57" r="3" /><circle cx="64" cy="57" r="3" />
      </g>
      <circle cx="43" cy="44" r="2.600" fill="#44707d" />
    </svg>
  );
}

function WebStorm() {
  return (
    <svg className="h-[94px] w-[94px]" viewBox="0 0 94 94">
      <path d="M0 10L24 0 38 8 52 2 70 20 92 60 52 84 12 82Z" fill="#24d6e0" />
      <path d="M8 60L12 84 65 93 70 70 52 84 36 70Z" fill="#2e9ede" />
      <path d="M38 20L60 0 82 2 88 22Z" fill="#f9e85c" />
      <path d="M82 2L93 32 80 56 70 20Z" fill="#3bb9d2" />
      <path d="M80 46L93 62 68 78Z" fill="#24d6e0" />
      <rect x="19" y="19" width="55" height="55" fill="#0d0d0d" />
      <text x="22" y="49" fontSize="34" fontWeight="700" fill="#fff" textLength="49" lengthAdjust="spacingAndGlyphs" fontFamily="Open Sans, sans-serif">WS</text>
      <path d="M25 65h20" stroke="#fff" strokeWidth="4" />
    </svg>
  );
}

function Photoshop() {
  return (
    <div className="h-[90px] w-[92px] border-[3.5px] border-[#22c9fb] bg-[#03252e] pl-[18px] text-[58px] font-semibold leading-[74px] text-[#22c9fb] font-['Open_Sans',sans-serif]">
      <Fit w={51}>Ps</Fit>
    </div>
  );
}

function Evernote() {
  return (
    <svg className="h-[84px] w-[84px]" viewBox="0 0 84 84">
      <defs>
        <linearGradient id="ev" x1="0" x2="0" y1="0" y2="1"><stop stopColor="#5be052" /><stop offset="1" stopColor="#2ba61f" /></linearGradient>
      </defs>
      <rect width="84" height="84" rx="4" fill="url(#ev)" />
      <path d="M28 11v10q0 3-3 3H16Z" fill="#3f3f3f" />
      <path d="M29 13q7-5 15 1 8 0 18 3 4 2 5 18 1 24-5 36-2 3-12 3-9-1-9-8t7-8h4v6h-3q-2 5 2 5 6 0 6-9-2-8-9-8-6-1-7-5-1 8-6 7-12-2-16-7-5-10-4-19 0-3 3-3h7q4-1 4-5Z" fill="#3f3f3f" />
      <path d="M51 40q1-5 6-4 2 1 2 5-4-2-8-1Z" fill="#5fd757" />
    </svg>
  );
}

function Chrome() {
  return (
    <svg className="size-[91px]" viewBox="0 0 92 92">
      <path d="M46 46L8 22A45 45 0 0 1 88 26H46Z" fill="#db4a42" />
      <path d="M46 46l42-20A45 45 0 0 1 45 91Z" fill="#fecb4d" />
      <path d="M8 22l22 34 32 4L45 91A45 45 0 0 1 8 22Z" fill="#22a05f" />
      <path d="M8 22L27 52 46 28Z" fill="#c9413a" />
      <circle cx="46" cy="46" r="20.500" fill="#f3f3f3" />
      <circle cx="46" cy="46" r="16.500" fill="#4a8af4" />
    </svg>
  );
}

function Folder() {
  return (
    <svg className="h-[74px] w-[92px]" viewBox="0 0 92 74">
      <path d="M4 0H26q3 0 4 3l3 4H88q4 0 4 4v59q0 3-3 3H3q-3 0-3-3V4q0-4 4-4Z" fill="#a5e0fc" />
      <path d="M0 13q0-2 3-2H89q3 0 3 2V70q0 3-3 3H3q-3 0-3-3Z" fill="#7fd3f8" />
      <path d="M0 65h92M0 68h92" stroke="#6cc0e6" />
      <g stroke="#5fb9e0" strokeWidth="4" fill="none"><path d="M22 42H69M46 20L66 56M44 27L26 56" /></g>
    </svg>
  );
}

function Trash() {
  return (
    <svg className="h-[92px] w-[72px]" viewBox="0 0 72 92">
      <defs>
        <linearGradient id="tr" x1="0" x2="1" y1="0" y2="0"><stop stopColor="#f3f1f1" /><stop offset=".2" stopColor="#d2d1d1" /><stop offset=".8" stopColor="#cecdcd" /><stop offset="1" stopColor="#f5f3f3" /></linearGradient>
      </defs>
      <ellipse cx="36" cy="13" rx="35" ry="9" fill="#d9b7bb" />
      <path d="M6 10l8-6 8-4 10 4 8 2 4-5 10 6 12 3-2 12H10Z" fill="#e9e9e9" />
      <path d="M14 14l8-8 3 8ZM38 12l8-7 7 9-6 5ZM28 6l6 3-3 5ZM18 16l8-2 2 5ZM56 12l7 4-6 3Z" fill="#3b3f4a" />
      <path d="M22 12l8-2 2 5-6 2Z" fill="#2fb8d8" /><path d="M44 13l5 0-1 5Z" fill="#c25a35" /><path d="M56 7l6 3-4 4Z" fill="#888" />
      <path d="M0 12Q6 19 20 20q16 3 32 0 13-1 19-8L62 82q-2 9-26 9T9 82Z" fill="url(#tr)" />
    </svg>
  );
}

const dock = [
  { icon: <Finder />, on: true }, { icon: <Launchpad />, on: false }, { icon: <Terminal />, on: false },
  { icon: <Messages />, on: false }, { icon: <Electron />, on: false }, { icon: <WebStorm />, on: true },
  { icon: <Photoshop />, on: true }, { icon: <Evernote />, on: true }, { icon: <Chrome />, on: true },
];

function Dock() {
  return (
    <div className="absolute left-[826px] top-[1670px] flex h-[130px] w-[1228px] rounded-t-[10px] bg-[linear-gradient(rgba(0,0,0,0.12),transparent_70%),linear-gradient(90deg,#9d9290_0%,#a8957f_12%,#b99a66_20%,#cf9f56_35%,#e3a04c_50%,#eea04c_60%,#f0884f_70%,#f16a5c_80%,#f05c68_88%,#ef5a66_100%)] pl-[8px] shadow-[0_-2px_6px_rgba(0,0,0,0.3)]">
      {dock.map((d, i) => (
        <div key={i} className="flex w-[106px] shrink-0 flex-col items-center">
          <div className="flex h-[118px] items-center pt-[3px]">{d.icon}</div>
          {d.on && <div className="size-[8px] rounded-full bg-[#3b1405]" />}
        </div>
      ))}
      <div className="ml-[24px] mt-[18px] h-[94px] w-[2px] bg-[#b94038]" />
      <div className="ml-[28px] mt-[25px]"><Folder /></div>
      <div className="ml-[23px] mt-[14px]"><Trash /></div>
    </div>
  );
}

export default function App() {
  return (
    <div className="relative h-[1800px] w-[2880px] overflow-hidden bg-[#1e1c1c]">
      <Wallpaper />
      <div className="absolute right-0 top-[46px] h-[1622px] w-[40px] rounded-[10px] bg-[#dedede]" />
      <Editor />
      <Browser />
      <MenuBar />
      <Dock />
    </div>
  );
}
